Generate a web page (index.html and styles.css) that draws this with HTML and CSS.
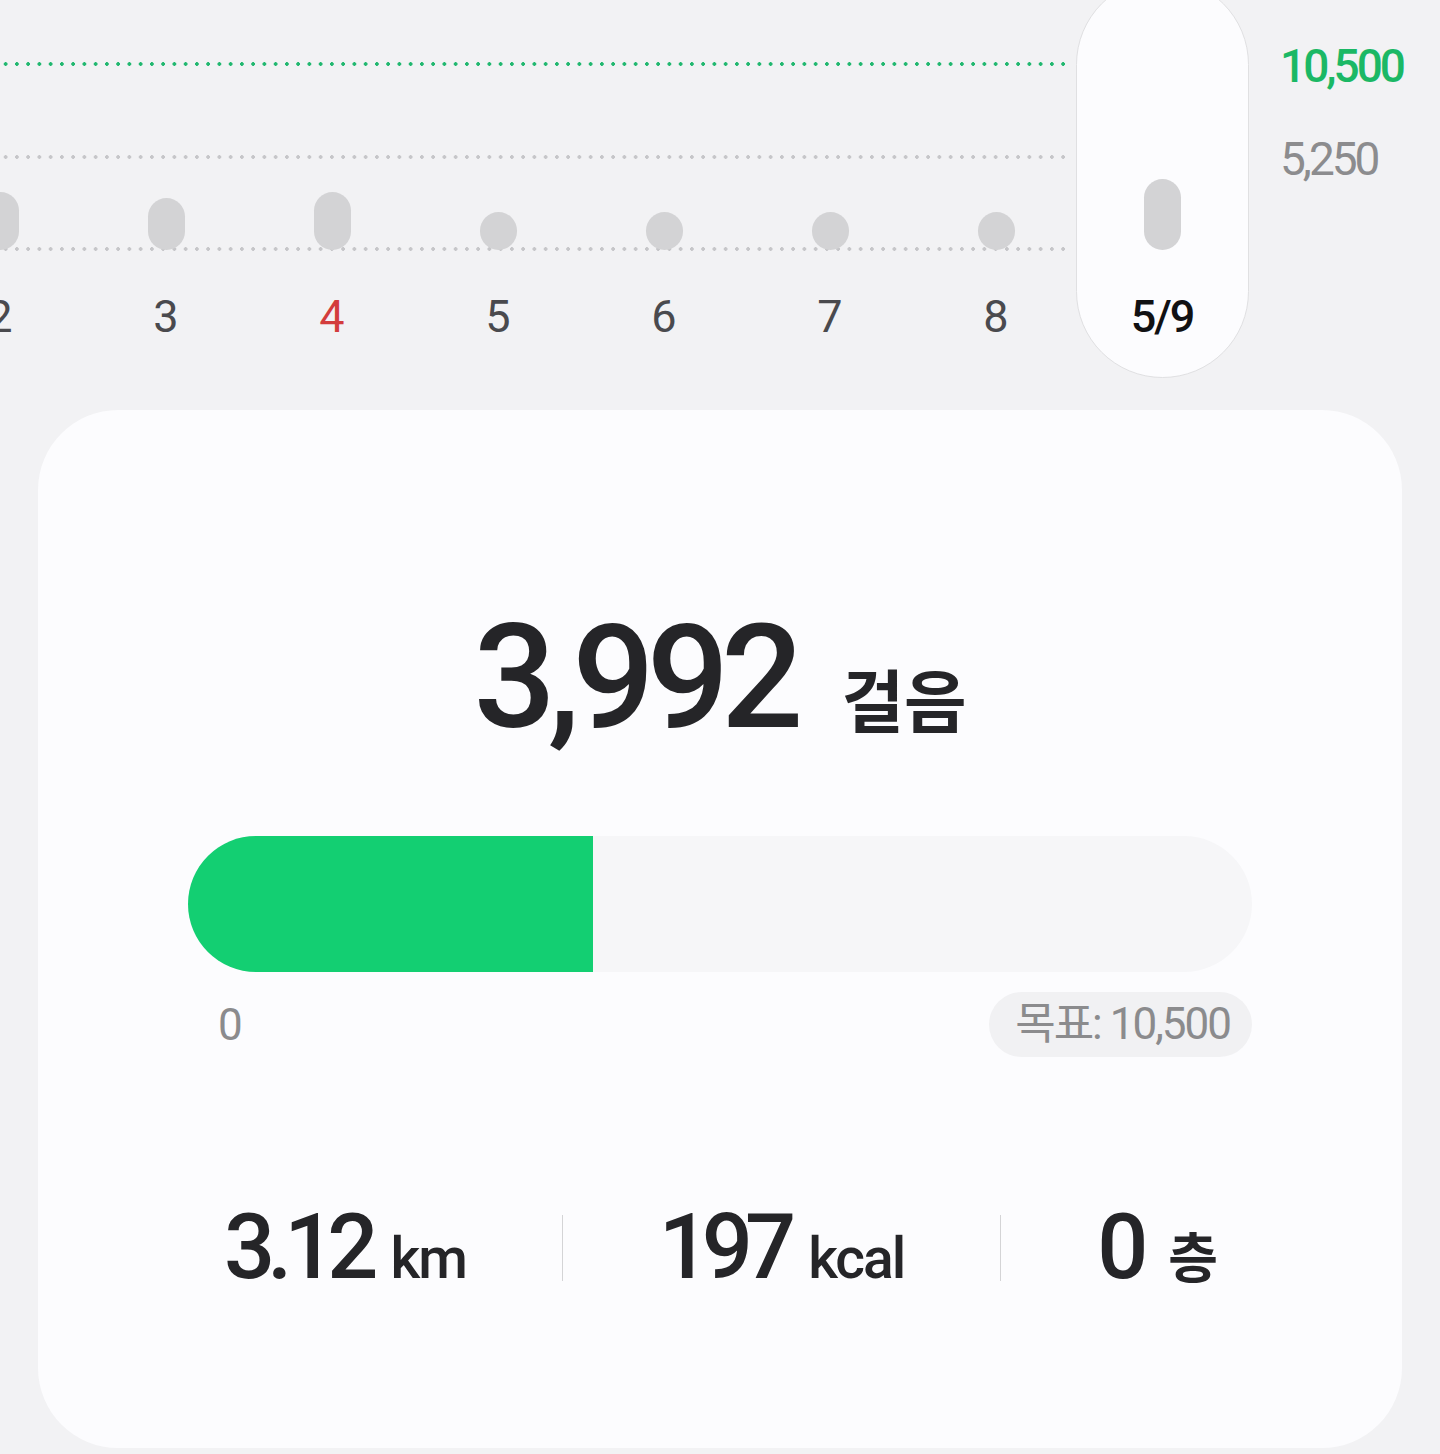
FILE: index.html
```html
<!DOCTYPE html>
<html lang="ko">
<head>
<meta charset="utf-8">
<title>걸음</title>
<link rel="stylesheet" href="styles.css">
</head>
<body>
<div class="screen">
  <section class="chart">
    <div class="gridlines">
      <div class="gline goal"></div>
      <div class="gline half"></div>
      <div class="gline base"></div>
    </div>
    <div class="days">
      <div class="day"><div class="plot"><span class="bar" style="height:58px"></span></div><span class="dlabel">2</span></div>
      <div class="day"><div class="plot"><span class="bar" style="height:52px"></span></div><span class="dlabel">3</span></div>
      <div class="day"><div class="plot"><span class="bar" style="height:58px"></span></div><span class="dlabel sun">4</span></div>
      <div class="day"><div class="plot"><span class="bar" style="height:38px"></span></div><span class="dlabel">5</span></div>
      <div class="day"><div class="plot"><span class="bar" style="height:38px"></span></div><span class="dlabel">6</span></div>
      <div class="day"><div class="plot"><span class="bar" style="height:38px"></span></div><span class="dlabel">7</span></div>
      <div class="day"><div class="plot"><span class="bar" style="height:38px"></span></div><span class="dlabel">8</span></div>
      <div class="day sel"><div class="plot"><span class="bar" style="height:71px"></span></div><span class="dlabel">5/9</span></div>
    </div>
    <div class="axis">
      <span class="axis-goal">10,500</span>
      <span class="axis-half">5,250</span>
    </div>
  </section>

  <main class="card">
    <div class="total">
      <span class="total-num">3,992</span>
      <span class="total-unit">걸음</span>
    </div>
    <div class="progress">
      <div class="fill" style="width:38.02%"></div>
    </div>
    <div class="range">
      <span class="zero">0</span>
      <span class="target">목표: 10,500</span>
    </div>
    <div class="stats">
      <div class="stat"><span class="num">3.12</span><span class="unit">km</span></div>
      <div class="divider"></div>
      <div class="stat"><span class="num">197</span><span class="unit">kcal</span></div>
      <div class="divider"></div>
      <div class="stat"><span class="num">0</span><span class="unit kr">층</span></div>
    </div>
  </main>
</div>
</body>
</html>
```

FILE: styles.css
```css
html, body {
  margin: 0;
  padding: 0;
}

body {
  background: #f2f2f4;
  font-family: Roboto, "Noto Sans CJK KR", sans-serif;
  color: #252528;
}

.screen {
  width: 1440px;
  height: 1454px;
  overflow: hidden;
}

/* ---------- chart ---------- */
.chart {
  display: grid;
  height: 410px;
  overflow: hidden;
}

.chart > * {
  grid-area: 1 / 1;
}

.gridlines {
  display: flex;
  flex-direction: column;
  width: 1070px;
}

.gline {
  height: 4px;
  background-repeat: repeat-x;
  background-size: 11.25px 4px;
}

.gline.goal {
  margin-top: 62px;
  background-image: radial-gradient(circle at 50% 50%, #22b870 1.6px, transparent 2.1px);
}

.gline.half {
  margin-top: 89px;
  background-image: radial-gradient(circle at 50% 50%, #c6c6c9 1.6px, transparent 2.1px);
}

.gline.base {
  margin-top: 88px;
  background-image: radial-gradient(circle at 50% 50%, #c6c6c9 1.6px, transparent 2.1px);
}

.days {
  display: flex;
  align-items: flex-start;
  margin-left: -83px;
}

.day {
  flex: none;
  width: 166px;
  display: flex;
  flex-direction: column;
  align-items: center;
}

.plot {
  height: 250px;
  display: flex;
  align-items: flex-end;
  justify-content: center;
}

.bar {
  display: block;
  width: 37px;
  border-radius: 19px;
  background: #d3d3d5;
}

.dlabel {
  margin-top: 37px;
  height: 60px;
  line-height: 60px;
  font-size: 45px;
  font-weight: 400;
  color: #4a4a4e;
}

.dlabel.sun {
  color: #d33c3c;
}

.day.sel {
  width: 173px;
  height: 400px;
  margin: -22px -3.5px 0;
  padding-top: 21px;
  box-sizing: border-box;
  background: #fcfcfe;
  border: 1px solid #e0e0e2;
  border-radius: 87px;
}

.day.sel .dlabel {
  color: #111113;
  font-weight: 500;
  letter-spacing: -2px;
}

.axis {
  justify-self: start;
  margin-left: 1280px;
  display: flex;
  flex-direction: column;
  align-items: flex-start;
}

.axis span {
  font-size: 46px;
  line-height: 50px;
  letter-spacing: -3px;
}

.axis-goal {
  margin-top: 41px;
  color: #1bb865;
  font-weight: 500;
}

.axis-half {
  margin-top: 43px;
  color: #8c8c8e;
  font-weight: 400;
}

/* ---------- card ---------- */
.card {
  margin: 0 38px;
  height: 1038px;
  box-sizing: border-box;
  padding: 195px 150px 0;
  background: #fcfcfe;
  border-radius: 80px;
  display: flex;
  flex-direction: column;
}

.total {
  display: flex;
  align-items: baseline;
  justify-content: center;
  line-height: 1;
}

.total-num {
  font-size: 145px;
  font-weight: 500;
  letter-spacing: -8px;
  color: #252528;
}

.total-unit {
  margin-left: 46px;
  font-family: "Noto Sans CJK KR", sans-serif;
  font-size: 68px;
  font-weight: 700;
  color: #252528;
}

.progress {
  margin-top: 86px;
  height: 136px;
  border-radius: 68px;
  background: #f6f6f8;
  overflow: hidden;
  display: flex;
}

.fill {
  height: 100%;
  background: #13cf72;
}

.range {
  margin-top: 20px;
  display: flex;
  align-items: center;
  justify-content: space-between;
}

.zero {
  margin-left: 30px;
  font-size: 44px;
  color: #8b8b8d;
}

.target {
  height: 65px;
  line-height: 65px;
  padding: 0 22px 0 26px;
  border-radius: 33px;
  background: #f1f1f3;
  font-size: 44px;
  letter-spacing: -2px;
  color: #8b8b8d;
}

.stats {
  margin-top: 146px;
  padding: 0 36px;
  display: flex;
  align-items: center;
  justify-content: space-between;
}

.stat {
  display: flex;
  align-items: baseline;
  line-height: 1;
  color: #252528;
}

.stat .num {
  font-size: 90px;
  font-weight: 500;
  letter-spacing: -8px;
}

.stat .unit {
  margin-left: 20px;
  font-size: 57px;
  font-weight: 500;
  letter-spacing: -2px;
}

.stat .unit.kr {
  font-family: "Noto Sans CJK KR", sans-serif;
  font-size: 54px;
  font-weight: 700;
  margin-left: 28px;
}

.divider {
  width: 1px;
  height: 66px;
  background: #d4d4d6;
}
```
